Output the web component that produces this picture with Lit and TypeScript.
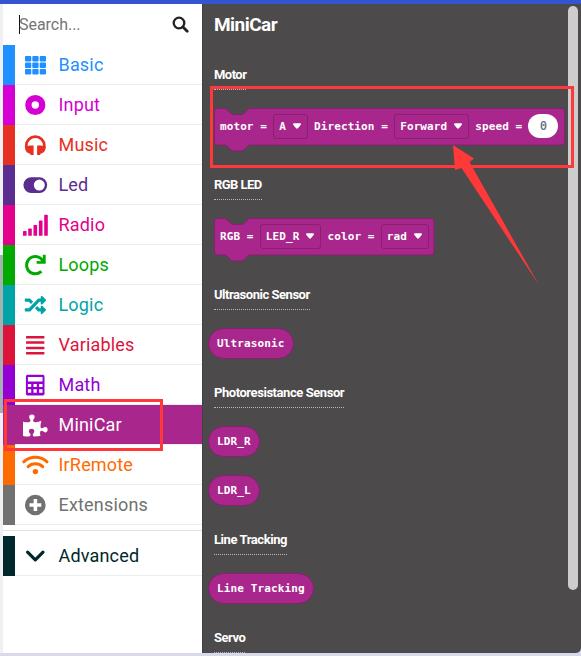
import { LitElement, html, css, svg } from "lit";
import { customElement, property } from "lit/decorators.js";
import { classMap } from "lit/directives/class-map.js";
import { styleMap } from "lit/directives/style-map.js";

const icons: Record<string, unknown> = {
  grid: svg`${[5, 11.6, 18].map((y) => [4, 11.3, 18.7].map((x) => svg`<rect x=${x} y=${y} width="6.3" height="5.5" rx="1"/>`))}`,
  ring: svg`<circle cx="14.3" cy="14" r="6.9" fill="none" stroke="currentColor" stroke-width="6.4"/>`,
  headphones: svg`<path d="M5.3 17v-2.4a9 8.9 0 0 1 18 0V17" fill="none" stroke="currentColor" stroke-width="2.7"/><path d="M9 14.6h3.6v9.3H9.4v-1.1C6.2 22 4 20 4 16.200Q6 14.8 9 14.600zM16.100 14.600h3.600q3 .2 5 1.600c0 3.800-2.300 5.800-5.400 6.600v1.100h-3.200z"/>`,
  toggle: svg`<path fill-rule="evenodd" d="M10.3 6.2h8a7.9 7.9 0 0 1 0 15.8h-8a7.9 7.9 0 0 1 0-15.8zM18.3 8.6a5.5 5.5 0 1 0 0 11a5.5 5.5 0 0 0 0-11z"/>`,
  signal: svg`<rect x="2" y="20" width="3.6" height="4.8" rx=".6"/><rect x="7.2" y="17.6" width="3.6" height="7.2" rx=".6"/><rect x="12.5" y="14" width="3.6" height="10.8" rx=".6"/><rect x="17.9" y="9.6" width="3.6" height="15.2" rx=".6"/><rect x="23.2" y="3.8" width="3.6" height="21" rx=".6"/>`,
  redo: svg`<path transform="translate(3.8 3.7) scale(.0408)" d="M500.33 0h-47.41a12 12 0 0 0-12 12.57l4 82.76A247.42 247.42 0 0 0 256 8C119.34 8 7.9 119.53 8 256.19 8.1 393.07 119.1 504 256 504a247.1 247.1 0 0 0 166.18-63.91 12 12 0 0 0 .48-17.43l-34-34a12 12 0 0 0-16.38-.55A176 176 0 1 1 402.1 157.8l-101.53-4.87a12 12 0 0 0-12.57 12v47.41a12 12 0 0 0 12 12h200.33a12 12 0 0 0 12-12V12a12 12 0 0 0-12-12z"/>`,
  random: svg`<path transform="translate(3.8 3.7) scale(.0415 .0405)" d="M504.971 359.029c9.373 9.373 9.373 24.569 0 33.941l-80 79.984c-15.01 15.01-40.971 4.49-40.971-16.971V416h-58.785a12.004 12.004 0 0 1-8.773-3.812l-70.556-75.596 53.333-57.143L352 336h32v-39.981c0-21.438 25.943-31.998 40.971-16.971l80 79.981zM12 176h84l52.781 56.551 53.333-57.143-70.556-75.596A11.999 11.999 0 0 0 122.785 96H12c-6.627 0-12 5.373-12 12v56c0 6.627 5.373 12 12 12zm372 0v39.984c0 21.46 25.961 31.98 40.971 16.971l80-79.984c9.373-9.373 9.373-24.569 0-33.941l-80-79.981C409.943 24.021 384 34.582 384 56.019V96h-58.785a12.004 12.004 0 0 0-8.773 3.812L96 336H12c-6.627 0-12 5.373-12 12v56c0 6.627 5.373 12 12 12h110.785c3.326 0 6.503-1.381 8.773-3.812L352 176h32z"/>`,
  lines: svg`${[5, 10.3, 15.7, 21].map((y) => svg`<rect x="5" y=${y} width="18.4" height="2.5" rx=".6"/>`)}`,
  calculator: svg`<path fill-rule="evenodd" d="M6.5 3.8h15.4q1.600 0 1.600 1.600v17.400q0 1.600-1.600 1.600H6.500q-1.600 0-1.600-1.600V5.400q0-1.600 1.600-1.600zM6.900 5.900v4.700h14.600V5.900zM6.900 13h3.300v3H6.900zM12.500 13h3.300v3h-3.300zM18.100 13h3.400v3h-3.400zM6.900 18.300h3.300v3.500H6.900zM12.500 18.300h3.300v3.500h-3.300zM18.100 18.300h3.400v3.500h-3.400z"/>`,
  puzzle: svg`<path transform="translate(2 3.6) scale(.0428)" d="M519.442 288.651c-41.519 0-59.5 31.593-82.058 31.593C377.409 320.244 432 144 432 144s-196.288 80-196.288-3.297c0-35.827 36.288-46.25 36.288-85.985C272 19.216 243.885 0 210.539 0c-34.654 0-66.366 18.891-66.366 56.346 0 41.364 31.711 59.277 31.711 81.75C175.885 207.719 0 166.758 0 166.758v333.237s178.635 41.047 178.635-28.662c0-22.473-40-40.107-40-81.471 0-37.456 29.25-56.346 63.577-56.346 33.673 0 61.788 19.216 61.788 54.717 0 39.735-36.288 50.158-36.288 85.985 0 60.803 129.675 25.73 181.23 25.73 0 0-34.725-120.101 25.827-120.101 35.962 0 46.423 36.152 86.308 36.152C556.712 416 576 387.99 576 354.443c0-34.199-18.962-65.792-56.558-65.792z"/>`,
  wifi: svg`<path d="M2.8 10.8a17 17 0 0 1 23.200 0M7.200 15.700a10.400 10.400 0 0 1 14.400 0" fill="none" stroke="currentColor" stroke-width="3" stroke-linecap="round"/><circle cx="14.4" cy="20.6" r="2.7"/>`,
  plus: svg`<path fill-rule="evenodd" d="M14.3 3.7a10.3 10.3 0 1 0 0 20.6a10.3 10.3 0 0 0 0-20.6zM12.6 8.1h3.6v4.1h4.1v3.6h-4.1v4.1h-3.6v-4.1H8.5v-3.6h4.1z"/>`,
  chevron: svg`<path d="M6.6 10.2l7.7 7.7 7.7-7.7" fill="none" stroke="currentColor" stroke-width="3.2" stroke-linecap="round" stroke-linejoin="round"/>`,
};

interface Category {
  name: string;
  color: string;
  icon: string;
  selected?: boolean;
}

const categories: Category[] = [
  { name: "Basic", color: "#1e90ff", icon: "grid" },
  { name: "Input", color: "#d400d4", icon: "ring" },
  { name: "Music", color: "#e63022", icon: "headphones" },
  { name: "Led", color: "#5c2d91", icon: "toggle" },
  { name: "Radio", color: "#e3008c", icon: "signal" },
  { name: "Loops", color: "#00aa00", icon: "redo" },
  { name: "Logic", color: "#00a4a6", icon: "random" },
  { name: "Variables", color: "#dc143c", icon: "lines" },
  { name: "Math", color: "#9400d3", icon: "calculator" },
  { name: "MiniCar", color: "#a9278c", icon: "puzzle", selected: true },
  { name: "IrRemote", color: "#ff6a00", icon: "wifi" },
  { name: "Extensions", color: "#717171", icon: "plus" },
];

const advanced: Category = { name: "Advanced", color: "#00272b", icon: "chevron" };

@customElement("toolbox-row")
class ToolboxRow extends LitElement {
  @property({ attribute: false }) item!: Category;

  static styles = css`
    :host { display: block; }
    .row { display: flex; height: 40px; box-sizing: border-box; color: var(--c); }
    .strip { width: 12px; background: var(--c); }
    .body { flex: 1; display: flex; align-items: center; box-sizing: border-box; border-bottom: 1px solid #eaeded; padding: 1px 0 0 6px; }
    .icon { width: 28px; height: 28px; fill: currentColor; flex: none; }
    .name { font: 18px/24px Roboto, sans-serif; letter-spacing: .18px; margin-left: 9.5px; white-space: nowrap; }
    .selected .body { background: var(--c); color: #fff; }
  `;

  render() {
    const { name, color, icon, selected } = this.item;
    return html`<div class=${classMap({ row: true, selected: !!selected })} style=${styleMap({ "--c": color })}>
      <div class="strip"></div>
      <div class="body">
        <svg class="icon" viewBox="0 0 28 28">${icons[icon]}</svg>
        <span class="name">${name}</span>
      </div>
    </div>`;
  }
}

type Part = { kind: "text" | "menu" | "number"; value: string };

@customElement("statement-block")
class StatementBlock extends LitElement {
  @property({ attribute: false }) parts: Part[] = [];
  @property({ type: Number }) width = 220;

  static styles = css`
    :host { display: block; }
    .block { position: relative; height: 44px; }
    .shape { position: absolute; inset: 0; overflow: visible; }
    .content { position: relative; height: 37px; display: flex; align-items: center; gap: 6.1px; padding-left: 6px; box-sizing: border-box; }
    .text, .menu, .number { font: bold 11px/14px "DejaVu Sans Mono", monospace; letter-spacing: .09px; color: #fff; white-space: pre; }
    .text { padding-top: 2px; }
    .menu { display: flex; align-items: center; gap: 7px; height: 25px; box-sizing: border-box; border: 1px solid #87206f; border-radius: 3px; padding: 2px 6px 0 5.2px; }
    .arrow { width: 8px; height: 6px; fill: #fff; margin-top: -2px; }
    .number { width: 30px; height: 24.5px; box-sizing: border-box; border-radius: 12.5px; background: #fff; color: #575e75; font-size: 11.5px; font-weight: normal; line-height: 25.5px; text-align: center; -webkit-text-stroke: .2px #575e75; }
  `;

  render() {
    const w = this.width;
    const d = `M.5 3.5q0-3 3-3H10.5c1.5 0 2 .6 3 1.6l3.2 3.2q1.2 1.2 2.6 1.2h8q1.6 0 2.8-1.2l3.2-3.2c1-1 1.6-1.6 3-1.6H${w - 3.5}q3 0 3 3V34q0 3-3 3H36.3c-1.4 0-2 .6-3 1.6l-3.2 3.2q-1.2 1.2-2.8 1.2h-8q-1.4 0-2.6-1.2l-3.2-3.2c-1-1-1.5-1.6-3-1.6h-7q-3 0-3-3z`;
    return html`<div class="block">
      <svg class="shape" width=${w} height="44"><path d=${d} fill="#a9278c" stroke="#87206f" /></svg>
      <div class="content">
        ${this.parts.map((p) =>
          p.kind === "menu"
            ? html`<span class="menu">${p.value}<svg class="arrow" viewBox="0 0 8 6"><path d="M1 .3h6q1 .1 1 1.2L5 5.2q-1 .9-2 0L0 1.5Q0 .4 1 .3z" /></svg></span>`
            : html`<span class=${p.kind}>${p.value}</span>`
        )}
      </div>
    </div>`;
  }
}

type Entry = { label: string; spacing: number; width?: number; parts?: Part[]; pills?: string[] };

const t = (value: string): Part => ({ kind: "text", value });
const m = (value: string): Part => ({ kind: "menu", value });

const entries: Entry[] = [
  { label: "Motor", spacing: -0.54, width: 351, parts: [t("motor ="), m("A"), t("Direction ="), m("Forward"), t("speed ="), { kind: "number", value: "0" }] },
  { label: "RGB LED", spacing: -0.54, width: 220.5, parts: [t("RGB ="), m("LED_R"), t("color ="), m("rad")] },
  { label: "Ultrasonic Sensor", spacing: -0.47, pills: ["Ultrasonic"] },
  { label: "Photoresistance Sensor", spacing: -0.44, pills: ["LDR_R", "LDR_L"] },
  { label: "Line Tracking", spacing: -0.43, pills: ["Line Tracking"] },
  { label: "Servo", spacing: -0.5 },
];

@customElement("app-root")
class AppRoot extends LitElement {
  static styles = css`
    :host { display: block; width: 581px; height: 656px; overflow: hidden; position: relative; background: #d9d9ec; }
    .top { height: 4px; background: #3454d1; }
    .main { display: flex; height: 649px; }
    .gutter { width: 3px; background: #eff0f3; padding-top: 251px; box-sizing: border-box; }
    .thumb { height: 158px; background: #a5b1b1; }
    .toolbox { width: 199px; background: #fff; }
    .search { height: 41px; display: flex; justify-content: space-between; align-items: center; padding: 0 13px 0 16px; box-sizing: border-box; }
    .hint { font: 16px/19px Roboto, sans-serif; color: #757575; border-left: 1px solid #111; text-indent: -1px; letter-spacing: -.03px; }
    .find { width: 17px; height: 17px; }
    .rule { height: 5px; border-bottom: 1px solid #dfe3e3; margin-bottom: 5px; }
    .flyout { flex: 1; background: #4c4a4b; border-radius: 0 0 5px 0; display: flex; justify-content: space-between; overflow: hidden; border-left: 1px solid #434142; box-sizing: border-box; }
    .list { padding-left: 11px; }
    .title { margin: 0; height: 60px; font: bold 19px/42px Roboto, sans-serif; color: #fff; letter-spacing: -.55px; }
    .label { width: max-content; height: 26px; box-sizing: border-box; border-bottom: 1px dotted #bbb; font: bold 13px/22px Roboto, sans-serif; letter-spacing: var(--ls); color: #fff; white-space: nowrap; }
    .block { display: block; margin: 17.5px 0 22.5px; }
    .pills { display: flex; flex-direction: column; align-items: flex-start; gap: 18px; margin: 18px 0 23px -6px; }
    .pill { height: 31px; box-sizing: border-box; border: 1px solid #87206f; border-radius: 16px; background: #a9278c; color: #fff; font: bold 11px/30px "DejaVu Sans Mono", monospace; letter-spacing: .12px; padding: 0 8.3px 0 8px; white-space: pre; }
    .bar { width: 10px; height: 584px; margin: 2px 3px 0 0; border-radius: 5px; background: #cdcdcd; }
    .overlay { position: absolute; left: 0; top: 0; }
  `;

  render() {
    return html`
      <div class="top"></div>
      <div class="main">
        <div class="gutter"><div class="thumb"></div></div>
        <div class="toolbox">
          <div class="search">
            <span class="hint">Search...</span>
            <svg class="find" viewBox="0 0 17 17" fill="none" stroke="#222"><circle cx="7" cy="7" r="5.3" stroke-width="2.3" /><path d="M11 11l4.2 4.2" stroke-width="2.8" stroke-linecap="round" /></svg>
          </div>
          ${categories.map((c) => html`<toolbox-row .item=${c}></toolbox-row>`)}
          <div class="rule"></div>
          <toolbox-row .item=${advanced}></toolbox-row>
        </div>
        <div class="flyout">
          <div class="list">
            <h2 class="title">MiniCar</h2>
            ${entries.map((e) => html`
              <div class="label" style=${styleMap({ "--ls": `${e.spacing}px` })}>${e.label}</div>
              ${e.parts ? html`<statement-block class="block" .parts=${e.parts} .width=${e.width ?? 220}></statement-block>` : ""}
              ${e.pills ? html`<div class="pills">${e.pills.map((p) => html`<span class="pill">${p}</span>`)}</div>` : ""}
            `)}
          </div>
          <div class="bar"></div>
        </div>
      </div>
      <svg class="overlay" width="581" height="656">
        <g fill="none" stroke="#ff3939" stroke-width="3">
          <rect x="211.5" y="87.5" width="361" height="79" />
          <rect x="5.5" y="400.5" width="156" height="49" />
        </g>
        <path fill="#ff3939" d="M453 145L474 158.500L469.500 162L539 285L461.500 168L455 170z" />
      </svg>`;
  }
}
